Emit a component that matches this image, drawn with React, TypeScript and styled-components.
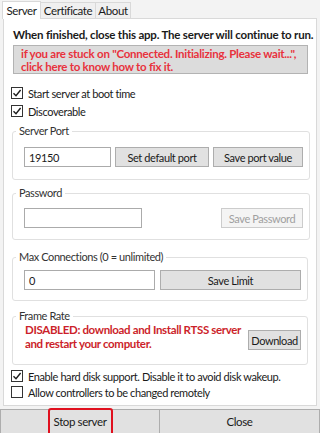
import styled, { createGlobalStyle } from 'styled-components';

const GlobalStyle = createGlobalStyle`
  html, body {
    margin: 0;
    padding: 0;
    background: #f0f0f0;
  }
  body {
    font-family: Lato, 'Open Sans', sans-serif;
    font-size: 11px;
    letter-spacing: -0.4px;
    color: #1a1a1a;
  }
`;

const Window = styled.div`
  width: 320px;
  height: 433px;
  display: flex;
  flex-direction: column;
  background: #f3f3f3;
  overflow: hidden;
`;

const TabStrip = styled.div`
  display: flex;
  align-items: flex-end;
  height: 18px;
  flex-shrink: 0;
  padding-left: 3px;
`;

const Tab = styled.div<{ $active?: boolean; $w: number }>`
  width: ${({ $w }) => $w}px;
  box-sizing: border-box;
  height: ${({ $active }) => ($active ? '18px' : '16px')};
  display: flex;
  align-items: center;
  justify-content: center;
  border: 1px solid #d9d9d9;
  border-bottom: none;
  margin-left: -1px;
  margin-bottom: ${({ $active }) => ($active ? '-1px' : '0')};
  background: ${({ $active }) => ($active ? '#ffffff' : '#f0f0f0')};
  position: relative;
  z-index: ${({ $active }) => ($active ? 1 : 0)};
  font-size: 11.5px;
`;

const Panel = styled.div`
  height: 388px;
  flex-shrink: 0;
  margin: 0 3px;
  box-sizing: border-box;
  border: 1px solid #d9d9d9;
  background: #ffffff;
  display: flex;
  flex-direction: column;
  padding-top: 8px;
`;

const Notice = styled.div`
  font-weight: 700;
  font-size: 11.5px;
  letter-spacing: -0.2px;
  line-height: 16px;
  padding-left: 9px;
  white-space: nowrap;
`;

const AlertBox = styled.div`
  margin: 2px 8px 0 9px;
  height: 29px;
  box-sizing: border-box;
  background: #dcdcdc;
  border: 1px solid #b3b3b3;
  color: #e8323c;
  font-weight: 700;
  font-size: 11.5px;
  letter-spacing: -0.25px;
  line-height: 13px;
  padding: 1px 7px;
  white-space: nowrap;
  cursor: pointer;
`;

const CheckList = styled.div<{ $top: number }>`
  display: flex;
  flex-direction: column;
  padding-left: 7px;
  margin-top: ${({ $top }) => $top}px;
`;

const CheckRow = styled.label<{ $h: number }>`
  display: flex;
  align-items: center;
  gap: 5px;
  height: ${({ $h }) => $h}px;
  white-space: nowrap;
`;

const Box = styled.span`
  width: 12px;
  height: 12px;
  flex-shrink: 0;
  box-sizing: border-box;
  border: 1px solid #333333;
  background: #ffffff;
  display: flex;
  align-items: center;
  justify-content: center;
`;

const Group = styled.fieldset<{ $gap: number }>`
  margin: ${({ $gap }) => $gap}px 8px 0 8px;
  padding: 0 6px 0 11px;
  border: 1px solid #e0e0e0;
  border-radius: 3px;
`;

const Legend = styled.legend`
  padding: 0 3px;
  margin-left: -8px;
  line-height: 14px;
  color: #333333;
`;

const FieldRow = styled.div<{ $pt: number; $pb: number }>`
  display: flex;
  align-items: flex-start;
  gap: 4px;
  padding: ${({ $pt, $pb }) => `${$pt}px 0 ${$pb}px`};
`;

const Input = styled.div<{ $w: number }>`
  width: ${({ $w }) => $w}px;
  height: 20px;
  box-sizing: border-box;
  border: 1px solid #ababab;
  background: #ffffff;
  padding-left: 4px;
  display: flex;
  align-items: center;
`;

const Button = styled.div<{ $w: number; $disabled?: boolean; $ml?: number; $mt?: number }>`
  width: ${({ $w }) => $w}px;
  height: 20px;
  flex-shrink: 0;
  box-sizing: border-box;
  margin-left: ${({ $ml }) => $ml ?? 0}px;
  margin-top: ${({ $mt }) => $mt ?? 0}px;
  border: 1px solid ${({ $disabled }) => ($disabled ? '#cccccc' : '#adadad')};
  background: ${({ $disabled }) => ($disabled ? '#f4f4f4' : '#e1e1e1')};
  color: ${({ $disabled }) => ($disabled ? '#a0a0a0' : '#1a1a1a')};
  display: flex;
  align-items: center;
  justify-content: center;
  white-space: nowrap;
`;

const Warning = styled.div`
  flex: 1;
  padding-left: 1px;
  color: #cc1f2b;
  font-weight: 700;
  font-size: 11.5px;
  letter-spacing: -0.35px;
  line-height: 14px;
  white-space: nowrap;
`;

const Footer = styled.div`
  display: grid;
  grid-template-columns: 1fr 1fr;
  height: 24px;
  margin-top: 3px;
  flex-shrink: 0;
`;

const FooterButton = styled.div`
  position: relative;
  background: #e1e1e1;
  border: 1px solid #adadad;
  border-bottom: none;
  display: flex;
  align-items: center;
  justify-content: center;
  font-size: 11.5px;
  & + & {
    border-left: none;
  }
`;

const Highlight = styled.span`
  position: absolute;
  left: 47px;
  width: 65px;
  top: -2px;
  bottom: -3px;
  box-sizing: border-box;
  border: 2px solid #e0101e;
  border-radius: 3px;
`;

function Check({ checked, label, h = 18 }: { checked?: boolean; label: string; h?: number }) {
  return (
    <CheckRow $h={h}>
      <Box>
        {checked && (
          <svg width="10" height="10" viewBox="0 0 10 10">
            <path d="M1.5 5.2 L4 7.7 L8.6 2" fill="none" stroke="#1a1a1a" strokeWidth="1.4" />
          </svg>
        )}
      </Box>
      {label}
    </CheckRow>
  );
}

export default function App() {
  return (
    <>
      <GlobalStyle />
      <Window>
        <TabStrip>
          <Tab $active $w={39}>Server</Tab>
          <Tab $w={56}>Certificate</Tab>
          <Tab $w={36}>About</Tab>
        </TabStrip>
        <Panel>
          <Notice>When finished, close this app. The server will continue to run.</Notice>
          <AlertBox>
            if you are stuck on "Connected. Initializing. Please wait...",
            <br />
            click here to know how to fix it.
          </AlertBox>
          <CheckList $top={10}>
            <Check checked label="Start server at boot time" />
            <Check checked label="Discoverable" />
          </CheckList>

          <Group $gap={4}>
            <Legend>Server Port</Legend>
            <FieldRow $pt={9} $pb={12}>
              <Input $w={87}>19150</Input>
              <Button $w={94}>Set default port</Button>
              <Button $w={90}>Save port value</Button>
            </FieldRow>
          </Group>

          <Group $gap={6}>
            <Legend>Password</Legend>
            <FieldRow $pt={8} $pb={11}>
              <Input $w={118} />
              <Button $w={82} $ml={75} $disabled>
                Save Password
              </Button>
            </FieldRow>
          </Group>

          <Group $gap={10}>
            <Legend>Max Connections (0 = unlimited)</Legend>
            <FieldRow $pt={6} $pb={10}>
              <Input $w={131}>0</Input>
              <Button $w={141} $ml={1}>Save Limit</Button>
            </FieldRow>
          </Group>

          <Group $gap={8}>
            <Legend>Frame Rate</Legend>
            <FieldRow $pt={0} $pb={13}>
              <Warning>
                DISABLED: download and Install RTSS server
                <br />
                and restart your computer.
              </Warning>
              <Button $w={53} $mt={7}>Download</Button>
            </FieldRow>
          </Group>

          <CheckList $top={3}>
            <Check h={16} checked label="Enable hard disk support. Disable it to avoid disk wakeup." />
            <Check h={16} label="Allow controllers to be changed remotely" />
          </CheckList>
        </Panel>
        <Footer>
          <FooterButton>
            Stop server
            <Highlight />
          </FooterButton>
          <FooterButton>Close</FooterButton>
        </Footer>
      </Window>
    </>
  );
}
